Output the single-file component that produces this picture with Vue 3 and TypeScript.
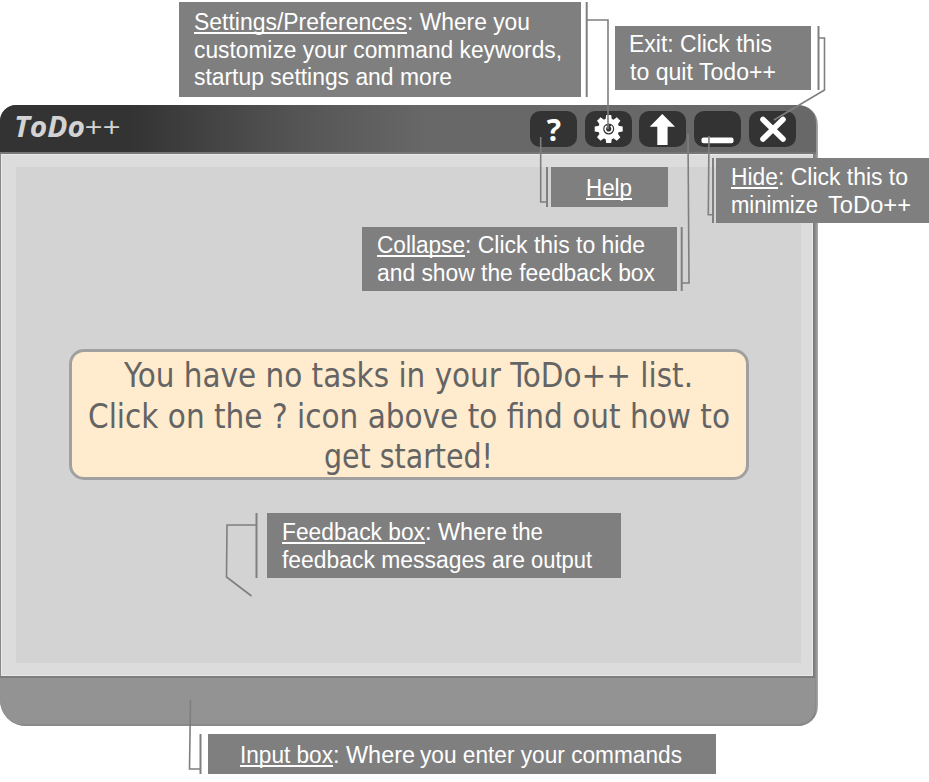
<script setup lang="ts">
interface Segment {
  text: string
  x: number
  y: number
  width: number
  underline?: boolean
}

interface Callout {
  id: string
  x: number
  y: number
  width: number
  height: number
  bar: string
  leader: string
  segments: Segment[]
}

interface Line {
  text: string
  x: number
  y: number
  width: number
}

const messageLines: Line[] = [
  { text: 'You have no tasks in your ToDo++ list.', x: 52, y: 35, width: 569 },
  { text: 'Click on the ? icon above to find out how to', x: 16, y: 75.5, width: 642 },
  { text: 'get started!', x: 252, y: 116, width: 169 },
]

const callouts: Callout[] = [
  {
    id: 'settings', x: 179, y: 2, width: 402, height: 95,
    bar: 'M586.7 2V97', leader: 'M587 20H608V129',
    segments: [
      { text: 'Settings/Preferences', x: 194, y: 30, width: 213, underline: true },
      { text: ': Where you', x: 407, y: 30, width: 123 },
      { text: 'customize your command keywords,', x: 194, y: 58, width: 368 },
      { text: 'startup settings and more', x: 194, y: 85, width: 258 },
    ],
  },
  {
    id: 'exit', x: 615, y: 26, width: 196, height: 64,
    bar: 'M818.5 26V90', leader: 'M819 38H824.5V90L774 120',
    segments: [
      { text: 'Exit: Click this', x: 629, y: 52, width: 143 },
      { text: 'to quit Todo++', x: 630, y: 80, width: 146 },
    ],
  },
  {
    id: 'help', x: 551, y: 167, width: 117, height: 40,
    bar: 'M547 167V207', leader: 'M540.7 137V202H547',
    segments: [{ text: 'Help', x: 586, y: 196, width: 46, underline: true }],
  },
  {
    id: 'hide', x: 716, y: 158, width: 213, height: 65,
    bar: 'M713 158V223', leader: 'M709 136L708.3 214.7H713',
    segments: [
      { text: 'Hide', x: 731, y: 185, width: 47, underline: true },
      { text: ': Click this to', x: 778, y: 185, width: 130 },
      { text: 'minimize', x: 731, y: 213, width: 87 },
      { text: 'ToDo++', x: 828, y: 213, width: 83 },
    ],
  },
  {
    id: 'collapse', x: 362, y: 227, width: 315, height: 64,
    bar: 'M681.7 227V291', leader: 'M688 134L689 283H682',
    segments: [
      { text: 'Collapse', x: 377, y: 253, width: 88, underline: true },
      { text: ': Click this to hide', x: 465, y: 253, width: 180 },
      { text: 'and show the feedback box', x: 377, y: 281, width: 278 },
    ],
  },
  {
    id: 'feedback', x: 267, y: 513, width: 354, height: 65,
    bar: 'M256.5 513V578', leader: 'M256 525H227L226.5 577L251.5 596',
    segments: [
      { text: 'Feedback box', x: 282, y: 540, width: 143, underline: true },
      { text: ': Where', x: 425, y: 540, width: 82 },
      { text: 'the', x: 512, y: 540, width: 31 },
      { text: 'feedback messages are', x: 282, y: 568, width: 243 },
      { text: 'output', x: 531, y: 568, width: 61 },
    ],
  },
  {
    id: 'input', x: 208, y: 734, width: 508, height: 40,
    bar: 'M200.5 734V774', leader: 'M190.5 700L189.5 769H200',
    segments: [
      { text: 'Input box', x: 240, y: 763, width: 93, underline: true },
      { text: ': Where', x: 333, y: 763, width: 82 },
      { text: 'you enter your commands', x: 420, y: 763, width: 262 },
    ],
  },
]

const gearTeeth = [0, 45, 90, 135, 180, 225, 270, 315]
</script>

<template>
  <main class="page">
    <section class="window">
      <header class="titlebar">
        <h1 class="title">
          <svg width="110" height="36">
            <text class="name" x="0" y="26" textLength="71" lengthAdjust="spacingAndGlyphs">ToDo</text>
            <text class="plus" x="70" y="26" textLength="36" lengthAdjust="spacingAndGlyphs">++</text>
          </svg>
        </h1>
        <nav class="controls">
          <button class="control" aria-label="Help">
            <svg viewBox="0 0 47 36"><text class="question" x="24" y="30" text-anchor="middle">?</text></svg>
          </button>
          <button class="control" aria-label="Settings">
            <svg viewBox="0 0 47 36">
              <g transform="translate(23.7 18)">
                <path v-for="a in gearTeeth" :key="a" d="M-3.2-9L-2.5-14H2.5L3.2-9Z" fill="#fff" :transform="`rotate(${a})`" />
                <circle r="8" fill="none" stroke="#fff" stroke-width="5" />
                <path d="M-2-3A3.5 3.5 0 1 0 2-3" fill="none" stroke="#fff" stroke-width="1.7" />
              </g>
            </svg>
          </button>
          <button class="control" aria-label="Collapse">
            <svg viewBox="0 0 47 36"><path d="M23.3 3L36 15.8H28.6V34H18.3V15.8H10.7Z" fill="#fff" /></svg>
          </button>
          <button class="control" aria-label="Hide">
            <svg viewBox="0 0 47 36"><rect x="7.5" y="26.5" width="32" height="5.8" rx="2" fill="#fff" /></svg>
          </button>
          <button class="control" aria-label="Exit">
            <svg viewBox="0 0 47 36"><path d="M14 8.5L34 28M34 8.5L14 28" stroke="#fff" stroke-width="5.6" stroke-linecap="round" /></svg>
          </button>
        </nav>
      </header>
      <div class="body">
        <div class="panel">
          <div class="message">
            <svg width="674" height="125">
              <text v-for="line in messageLines" :key="line.text" :x="line.x" :y="line.y" :textLength="line.width" lengthAdjust="spacingAndGlyphs">{{ line.text }}</text>
            </svg>
          </div>
        </div>
      </div>
      <footer class="input"></footer>
    </section>

    <svg class="annotations" viewBox="0 0 929 782">
      <g v-for="c in callouts" :key="c.id">
        <rect :x="c.x" :y="c.y" :width="c.width" :height="c.height" fill="#7f7f7f" />
        <path :d="c.bar" class="bar" />
        <path :d="c.leader" class="leader" />
        <template v-for="s in c.segments" :key="s.text">
          <text :x="s.x" :y="s.y" :textLength="s.width" lengthAdjust="spacingAndGlyphs">{{ s.text }}</text>
          <rect v-if="s.underline" :x="s.x" :y="s.y + 2" :width="s.width" height="2" fill="#fff" />
        </template>
      </g>
    </svg>
  </main>
</template>

<style>
body {
  margin: 0;
  background: #fff;
}
</style>

<style scoped>
.page {
  position: relative;
  box-sizing: border-box;
  width: 929px;
  height: 782px;
  padding-top: 105px;
  overflow: hidden;
}
.window {
  display: flex;
  flex-direction: column;
  box-sizing: border-box;
  width: 818px;
  height: 621px;
  border-radius: 16px 20px 20px 26px;
  overflow: hidden;
  background: linear-gradient(to right, #888 0 812px, #777 813px, #858585 815px, #aaa 818px);
}
.titlebar {
  display: flex;
  justify-content: space-between;
  box-sizing: border-box;
  width: 816px;
  height: 49px;
  padding: 6px 20px 0 14px;
  border-bottom: 2px solid #767676;
  border-radius: 0 18px 0 0;
  background: linear-gradient(to right, #333 0 130px, #555 300px, #686868 430px, #686868);
}
.title {
  margin: 0;
  height: 36px;
}
.title text {
  font-family: "Open Sans", sans-serif;
  font-size: 28px;
  font-style: italic;
  fill: #d3d3d3;
}
.title .name {
  font-weight: 700;
}
.title .plus {
  font-weight: 400;
}
.controls {
  display: flex;
  gap: 7.8px;
}
.control {
  width: 47px;
  height: 36px;
  padding: 0;
  border: 0;
  border-radius: 10px;
  background: #333;
}
.control svg {
  display: block;
  width: 47px;
  height: 36px;
}
.question {
  font: 700 30px "Open Sans", sans-serif;
  fill: #fff;
}
.body {
  box-sizing: border-box;
  width: 812px;
  height: 522px;
  margin-left: 1px;
  padding: 12px 11px 13px 14px;
  border: 1px solid #e8e8e8;
  border-right-width: 1px;
  background: #dcdcdc;
}
.panel {
  display: flex;
  justify-content: center;
  box-sizing: border-box;
  height: 496px;
  padding-top: 182px;
  background: #d3d3d3;
}
.message {
  box-sizing: border-box;
  width: 680px;
  height: 131px;
  border: 3px solid #a0a0a0;
  border-radius: 15px;
  background: #ffebcd;
}
.message svg {
  display: block;
}
.message text {
  font-family: "DejaVu Sans Condensed", "DejaVu Sans", sans-serif;
  font-size: 33.5px;
  fill: #646464;
}
.input {
  flex: 1;
  width: 815px;
  border-top: 2px solid #7d7d7d;
  border-bottom: 2px solid #898989;
  border-radius: 0 0 17px 0;
  background: #939393;
}
.annotations {
  position: absolute;
  inset: 0;
  width: 929px;
  height: 782px;
}
.annotations text {
  font-family: "Liberation Sans", sans-serif;
  font-size: 23px;
  fill: #fff;
}
.bar,
.leader {
  fill: none;
  stroke: #7f7f7f;
}
.bar {
  stroke-width: 2;
}
.leader {
  stroke-width: 1.6;
}
</style>
